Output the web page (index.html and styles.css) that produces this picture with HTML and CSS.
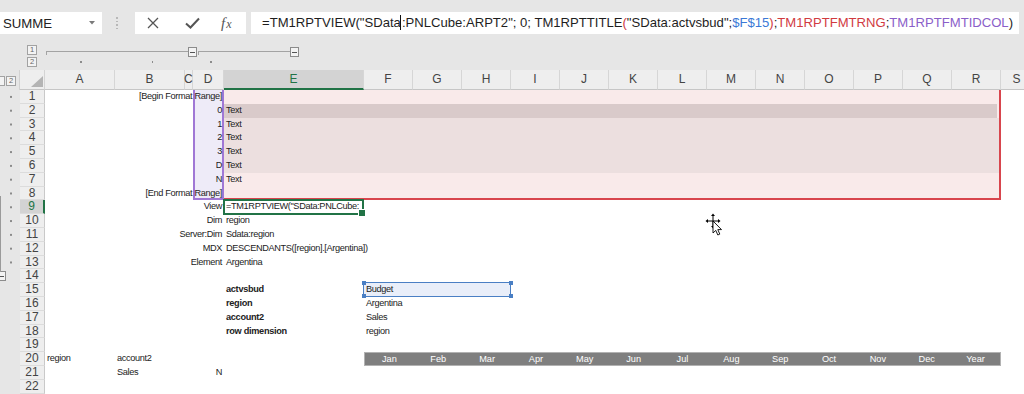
FILE: index.html
```html
<!DOCTYPE html>
<html>
<head>
<meta charset="utf-8">
<title>Excel TM1 Report</title>
<link rel="stylesheet" href="styles.css">
</head>
<body>
<div class="app">
  <div class="topbar">
    <div class="namebox"><span>SUMME</span>
      <svg class="dd" width="6" height="4" viewBox="0 0 6 4"><polygon points="0,0 6,0 3,3.5" fill="#7a7a7a"/></svg>
    </div>
    <div class="grip"><i></i><i></i><i></i><i></i></div>
    <div class="fxbox">
      <svg class="ic-x" width="12" height="12" viewBox="0 0 12 12"><path d="M1 1 L11 11 M11 1 L1 11" stroke="#555" stroke-width="1.3" fill="none"/></svg>
      <svg class="ic-ok" width="15" height="12" viewBox="0 0 15 12"><path d="M1 6.5 L5.5 10.5 L14 1.5" stroke="#555" stroke-width="2" fill="none"/></svg>
      <span class="fxt"><i>f</i><i class="sub">x</i></span>
    </div>
    <div class="formula">=TM1RPTVIEW("SData<span class="caret"></span>:PNLCube:ARPT2"; 0; TM1RPTTITLE<span class="red">(</span>"SData:actvsbud";<span class="blue">$F$15</span><span class="red">)</span>;<span class="red">TM1RPTFMTRNG</span>;<span class="pur">TM1RPTFMTIDCOL</span>)</div>
  </div>

  <div class="outline">
    <div class="lvl"><span>1</span><span>2</span></div>
    <div class="bars">
      <div class="bar-row">
        <div class="line l1"></div>
        <div class="minus"></div>
        <div class="line l2"></div>
        <div class="minus"></div>
      </div>
      <div class="odots"><i class="d1"></i><i class="d2"></i><i class="d3"></i></div>
    </div>
  </div>

  <div class="sheet">
    <div class="colhdr">
      <div class="hg"><span class="hl1"></span><span>2</span></div>
      <div class="selall"><svg width="12" height="11" viewBox="0 0 12 11"><polygon points="0,11 12,11 12,0" fill="#b4b4b4"/></svg></div>
      <div class="ch w70">A</div>
      <div class="ch w70">B</div>
      <div class="ch w8">C</div>
      <div class="ch w31">D</div>
      <div class="ch w140 on">E</div>
      <div class="ch">F</div>
      <div class="ch">G</div>
      <div class="ch">H</div>
      <div class="ch">I</div>
      <div class="ch">J</div>
      <div class="ch">K</div>
      <div class="ch">L</div>
      <div class="ch">M</div>
      <div class="ch">N</div>
      <div class="ch">O</div>
      <div class="ch">P</div>
      <div class="ch">Q</div>
      <div class="ch">R</div>
      <div class="ch w32">S</div>
    </div>

    <div class="sbody">
      <div class="gutter">
        <div class="gdots"></div>
        <div class="gmin"><span></span></div>
      </div>
      <div class="rows">
        <div class="rh">1</div><div class="rh">2</div><div class="rh">3</div><div class="rh">4</div>
        <div class="rh">5</div><div class="rh">6</div><div class="rh">7</div><div class="rh">8</div>
        <div class="rh on">9</div><div class="rh">10</div><div class="rh">11</div><div class="rh">12</div>
        <div class="rh">13</div><div class="rh">14</div><div class="rh">15</div><div class="rh">16</div>
        <div class="rh">17</div><div class="rh">18</div><div class="rh">19</div><div class="rh">20</div>
        <div class="rh">21</div><div class="rh">22</div>
      </div>

      <div class="cells">
        <div class="fmt"></div>
        <div class="fmt2"></div>
        <div class="fmt36"></div>
        <div class="dbox"></div>
        <div class="sel15"><i class="h tl"></i><i class="h tr"></i><i class="h bl"></i><i class="h br"></i></div>

        <div class="c rt r1 cd">[Begin Format Range]</div>
        <div class="c rt r2 cd">0</div><div class="c r2 ce">Text</div>
        <div class="c rt r3 cd">1</div><div class="c r3 ce">Text</div>
        <div class="c rt r4 cd">2</div><div class="c r4 ce">Text</div>
        <div class="c rt r5 cd">3</div><div class="c r5 ce">Text</div>
        <div class="c rt r6 cd">D</div><div class="c r6 ce">Text</div>
        <div class="c rt r7 cd">N</div><div class="c r7 ce">Text</div>
        <div class="c rt r8 cd">[End Format Range]</div>

        <div class="c rt r9 cd">View</div><div class="c r9 ce">=TM1RPTVIEW("SData:PNLCube:</div>
        <div class="c rt r10 cd">Dim</div><div class="c r10 ce">region</div>
        <div class="c rt r11 cd">Server:Dim</div><div class="c r11 ce">Sdata:region</div>
        <div class="c rt r12 cd">MDX</div><div class="c r12 ce">DESCENDANTS([region].[Argentina])</div>
        <div class="c rt r13 cd">Element</div><div class="c r13 ce">Argentina</div>

        <div class="c b r15 ce">actvsbud</div><div class="c r15 cf">Budget</div>
        <div class="c b r16 ce">region</div><div class="c r16 cf">Argentina</div>
        <div class="c b r17 ce">account2</div><div class="c r17 cf">Sales</div>
        <div class="c b r18 ce">row dimension</div><div class="c r18 cf">region</div>

        <div class="c r20 ca">region</div><div class="c r20 cb">account2</div>
        <div class="months">
          <span>Jan</span><span>Feb</span><span>Mar</span><span>Apr</span><span>May</span><span>Jun</span><span>Jul</span><span>Aug</span><span>Sep</span><span>Oct</span><span>Nov</span><span>Dec</span><span>Year</span>
        </div>
        <div class="c r21 cb">Sales</div><div class="c rt r21 cd">N</div>

        <div class="act"></div>
      </div>
    </div>
  </div>

  <svg class="cursor" width="24" height="26" viewBox="0 0 24 26">
    <g fill="#000" stroke="none">
      <polygon points="9,1.5 7,4 11,4"/>
      <polygon points="9,16.5 7,14 11,14"/>
      <polygon points="1.5,9 4,7 4,11"/>
      <polygon points="16.5,9 14,7 14,11"/>
    </g>
    <path d="M9 4 V14 M4 9 H14" stroke="#000" stroke-width="1" fill="none"/>
    <polygon points="9,9 9,21 11.8,18.4 13.8,23 15.8,22.1 13.8,17.6 17.5,17.6" fill="#fff" stroke="#000" stroke-width="0.9" stroke-linejoin="round"/>
  </svg>
</div>
</body>
</html>
```
FILE: styles.css
```css
* { box-sizing: border-box; }
html, body { margin: 0; padding: 0; }
body {
  width: 1024px;
  height: 394px;
  overflow: hidden;
  background: #e6e6e6;
  font-family: "Liberation Sans", Arial, sans-serif;
  color: #222;
}
.app { position: relative; width: 1024px; height: 394px; overflow: hidden; }

/* formula bar */
.topbar { height: 36px; display: flex; align-items: flex-start; padding-top: 12px; }
.namebox {
  width: 102px; height: 22px; flex: none; background: #fff;
  display: flex; align-items: center; padding-left: 3px;
  font-size: 13.2px; color: #222;
}
.namebox .dd { margin-left: auto; margin-right: 7px; }
.grip { margin-left: 14px; width: 2px; height: 22px; flex: none; display: flex; flex-direction: column; justify-content: center; gap: 2px; }
.grip i { display: block; width: 2px; height: 1.5px; background: #b8b8b8; }
.fxbox {
  margin-left: 17px; width: 111px; height: 22px; flex: none; background: #fff;
  display: flex; align-items: center; padding-left: 12px;
}
.ic-ok { margin-left: 26px; }
.fxt { margin-left: 21px; font-family: "Liberation Serif", serif; font-size: 15px; color: #555; line-height: 22px; }
.fxt i { font-style: italic; }
.fxt .sub { font-size: 12px; margin-left: 1px; }
.formula {
  margin-left: 5px; width: 768px; height: 22px; flex: none; background: #fff;
  padding-left: 11px; font-size: 13.1px; line-height: 22px; white-space: nowrap; overflow: hidden; color: #1e1e1e;
}
.caret { display: inline-block; width: 1px; height: 15px; background: #111; vertical-align: -3px; margin: 0 1px 0 -1px; }
.red { color: #d13a3f; }
.blue { color: #3b78d6; }
.pur { color: #8a5ec9; }

/* outline area */
.outline { height: 34px; display: flex; padding-left: 27px; padding-top: 9px; }
.lvl { display: flex; flex-direction: column; gap: 2px; }
.lvl span, .hg span {
  display: block; width: 10px; height: 10px; border: 1px solid #a2a2a2; background: #f3f3f3;
  font-size: 7.5px; line-height: 8px; text-align: center; color: #666;
}
.bars { margin-left: 9px; padding-top: 2px; }
.bar-row { display: flex; align-items: flex-start; }
.line { height: 4px; margin-top: 4px; border-top: 1px solid #a3a3a3; border-left: 1px solid #a3a3a3; }
.l1 { width: 142px; }
.l2 { width: 92px; margin-left: 1px; }
.minus {
  width: 9px; height: 10px; border: 1px solid #8c8c8c; background: #f3f3f3;
  display: flex; align-items: center; justify-content: center;
}
.minus::before { content: ""; width: 5px; height: 1px; background: #555; }
.odots { display: flex; margin-top: 4px; height: 2px; }
.odots i { display: block; width: 1.5px; height: 1.5px; background: #8c8c8c; }
.odots .d1 { margin-left: 34px; }
.odots .d2 { margin-left: 70px; }
.odots .d3 { margin-left: 57px; }

/* sheet */
.sheet { height: 324px; }
.colhdr { display: flex; height: 20px; overflow: hidden; }
.hg { width: 20px; flex: none; display: flex; align-items: center; gap: 1px; padding-top: 2px; border-right: 1px solid #d2d2d2; }
.hg .hl1 { width: 5px; border-left: 0; }
.selall {
  width: 25px; flex: none; background: #eeeeee; border-right: 1px solid #d4d4d4; border-bottom: 1px solid #c6c6c6;
  display: flex; align-items: flex-end; justify-content: flex-end; padding: 0 1px 2px 0;
}
.ch {
  width: 49px; flex: none; text-align: center; font-size: 12px; line-height: 19px; color: #444;
  background: #eeeeee; border-right: 1px solid #d6d6d6; border-bottom: 1px solid #c6c6c6;
}
.ch.w70 { width: 70px; }
.ch.w8 { width: 8px; overflow: visible; text-indent: -1px; }
.ch.w31 { width: 31px; }
.ch.w140 { width: 140px; }
.ch.w32 { width: 32px; }
.ch.on { background: #d3d3d3; color: #217346; border-bottom: 2px solid #217346; }

.sbody { display: flex; height: 304px; overflow: hidden; }
.gutter { width: 20px; flex: none; display: flex; flex-direction: column; }
.gdots {
  height: 179.4px; flex: none;
  background-image: radial-gradient(circle at 11px 7px, #8a8a8a 0.8px, transparent 1.3px);
  background-size: 20px 13.8px;
}
.gmin { height: 13.8px; flex: none; display: flex; align-items: center; position: relative; }
.gmin span {
  display: flex; align-items: center; justify-content: center;
  width: 8px; height: 10px; margin-left: -2px; border: 1px solid #8c8c8c; background: #f3f3f3;
}
.gmin span::before { content: ""; width: 4px; height: 1px; background: #555; }
.gmin::after {
  content: ""; position: absolute; left: 0; bottom: 11px; width: 1px; height: 76px; background: #9a9a9a;
}
.rows { width: 25px; flex: none; display: flex; flex-direction: column; }
.rh {
  height: 13.8px; flex: none; line-height: 13.8px; text-align: center; font-size: 12px; color: #444;
  background: #eeeeee; border-bottom: 1px solid #dcdcdc; border-right: 1px solid #c9c9c9;
}
.rh.on { background: #d3d3d3; color: #217346; border-right: 2px solid #217346; }

.cells {
  flex: none; display: grid;
  grid-template-columns: 70px 70px 8px 31px 140px repeat(13, 49px) 32px;
  grid-template-rows: repeat(22, 13.8px);
  background: #fff;
  font-family: "Liberation Sans", Arial, sans-serif;
  font-size: 9.2px; letter-spacing: -0.35px; line-height: 13.8px; color: #222;
}
.c { position: relative; padding: 0 2px; white-space: nowrap; min-width: 0; }
.rt { display: flex; justify-content: flex-end; }
.b { font-weight: 700; letter-spacing: -0.3px; }

.r1 { grid-row: 1; } .r2 { grid-row: 2; } .r3 { grid-row: 3; } .r4 { grid-row: 4; }
.r5 { grid-row: 5; } .r6 { grid-row: 6; } .r7 { grid-row: 7; } .r8 { grid-row: 8; }
.r9 { grid-row: 9; } .r10 { grid-row: 10; } .r11 { grid-row: 11; } .r12 { grid-row: 12; }
.r13 { grid-row: 13; } .r15 { grid-row: 15; } .r16 { grid-row: 16; } .r17 { grid-row: 17; }
.r18 { grid-row: 18; } .r20 { grid-row: 20; } .r21 { grid-row: 21; }
.ca { grid-column: 1; } .cb { grid-column: 2; } .cd { grid-column: 4; }
.ce { grid-column: 5; } .cf { grid-column: 6; }

.fmt {
  grid-column: 5 / 19; grid-row: 1 / 9; background: #f9eaea;
  border-right: 2px solid #d8454d; border-bottom: 2px solid #d8454d;
}
.fmt2 { grid-column: 5 / 19; grid-row: 2; background: #d9caca; margin-right: 4px; }
.fmt36 { grid-column: 5 / 19; grid-row: 3 / 7; background: #ecdfdf; margin-right: 2px; }
.dbox {
  grid-column: 4; grid-row: 1 / 9; background: #eeebf8;
  border-left: 2px solid #a077d5; border-right: 2px solid #a077d5; border-bottom: 2px solid #a077d5;
}
.act {
  grid-column: 5; grid-row: 9; border: 2px solid #217346; margin: -1px 0 -1px -1px; position: relative;
}
.act::after {
  content: ""; position: absolute; right: -4px; bottom: -4px; width: 6px; height: 6px;
  background: #217346; border: 1px solid #fff;
}
.sel15 {
  grid-column: 6 / 9; grid-row: 15; background: #e9eef9; border: 1.5px solid #4a7fc4; position: relative;
  margin: -1px 0 0 -1px;
}
.sel15 .h { position: absolute; width: 4px; height: 4px; background: #4a7fc4; }
.sel15 .tl { left: -2.5px; top: -2.5px; }
.sel15 .tr { right: -2.5px; top: -2.5px; }
.sel15 .bl { left: -2.5px; bottom: -2.5px; }
.sel15 .br { right: -2.5px; bottom: -2.5px; }
.months {
  grid-column: 6 / 19; grid-row: 20; background: #7f7f7f; border: 1px solid #b2b2b2;
  display: grid; grid-template-columns: repeat(13, 1fr); color: #fff; text-align: center; line-height: 12px;
  letter-spacing: 0;
}
.cursor { position: absolute; left: 704px; top: 212px; }
```
